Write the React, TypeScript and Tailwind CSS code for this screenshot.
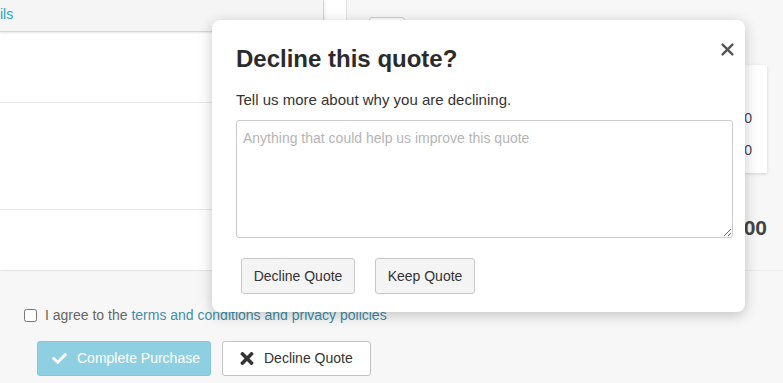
import React from "react";
import { FaCheck, FaTimes } from "react-icons/fa";

const font = "font-['Liberation_Sans',Arial,Helvetica,sans-serif]";

const DeclineModal = () => {
  return (
    <div className="absolute left-[212px] top-[20px] w-[533px] h-[292px] rounded-lg bg-white shadow-[0_3px_14px_rgba(0,0,0,0.22)] pl-6 pt-[24px]">
      {/* Close */}
      <button className="absolute right-[11px] top-[23px] w-[13px] h-[13px] text-[#555]">
        <svg viewBox="0 0 12 12" className="w-full h-full" fill="none" stroke="currentColor" strokeWidth="2.2" strokeLinecap="round">
          <path d="M1.5 1.5l9 9M10.5 1.5l-9 9" />
        </svg>
      </button>

      <h2 className="text-[24px] leading-[29px] font-bold text-[#2b2b2b]">
        Decline this quote?
      </h2>
      <p className="mt-[17px] text-[15px] leading-[20px] text-[#333]">
        Tell us more about why you are declining.
      </p>

      <textarea
        className="mt-[10px] block w-[497px] h-[118px] rounded-[3px] border border-[#ccc] px-[6px] py-[8px] text-[14px] leading-[18px] text-[#333] placeholder:text-[#b5b5b5] outline-none"
        placeholder="Anything that could help us improve this quote"
      />

      {/* Actions */}
      <div className="mt-5 ml-[5px] flex gap-5">
        <button className="w-[114px] h-[36px] rounded-[3px] border border-[#c8c8c8] bg-[#f4f4f4] text-[14px] text-[#333]">
          Decline Quote
        </button>
        <button className="w-[100px] h-[36px] rounded-[3px] border border-[#c8c8c8] bg-[#f4f4f4] text-[14px] text-[#333]">
          Keep Quote
        </button>
      </div>
    </div>
  );
};

const App = () => {
  return (
    <div className={`relative w-[783px] h-[383px] overflow-hidden bg-[#f7f7f7] ${font}`}>
      {/* Top area */}
      <div className="flex h-[270px] bg-white">
        {/* Left card */}
        <div className="w-[324px] flex flex-col border-r border-[#dcdcdc] shadow-[1px_0_3px_rgba(0,0,0,0.08)]">
          <div className="h-[32px] bg-[#f5f5f5] border-b border-[#d5d5d5] shadow-[0_1px_2px_rgba(0,0,0,0.1)] pt-[2px]">
            <span className="text-[14px] leading-[20px] text-[#2ba3c6]">ils</span>
          </div>
          <div className="h-[71px] border-b border-[#e6e6e6]" />
          <div className="h-[107px] border-b border-[#e6e6e6]" />
          <div className="flex-1" />
        </div>

        <div className="w-[22px]" />

        {/* Right column */}
        <div className="flex-1 bg-[#f7f7f7] border-l border-[#e2e2e2] pl-[22px] pt-[17px] flex flex-col">
          <div className="w-[36px] h-[30px] rounded-[3px] border border-[#ccc] bg-white" />
          <div className="mt-[18px] mr-4 h-[108px] bg-white shadow-[0_1px_3px_rgba(0,0,0,0.15)] pt-[37px] pr-[15px] text-right text-[14px] text-[#444]">
            <div className="leading-[32px]">$0.00</div>
            <div className="leading-[32px]">$0.00</div>
          </div>
          <div className="mt-[43px] mr-4 text-right text-[21px] leading-[24px] font-bold text-[#444]">
            $0.00
          </div>
        </div>
      </div>

      {/* Bottom area */}
      <div className="border-t border-[#ececec] px-6 pt-[35px]">
        <label className="flex items-center gap-2 text-[14px] leading-[18px] text-[#666]">
          <input type="checkbox" className="w-[13px] h-[13px] m-0" />
          <span>
            I agree to the{" "}
            <a className="text-[#3f8ea8]">terms and conditions and privacy policies</a>
          </span>
        </label>

        <div className="mt-[17px] ml-[13px] flex gap-[11px]">
          <button className="w-[174px] h-[35px] flex items-center gap-[10px] pl-[14px] rounded-[3px] border border-[#84c7db] bg-[#8ecfe2] text-[14px] text-white">
            <FaCheck className="w-[15px] h-[15px]" />
            Complete Purchase
          </button>
          <button className="w-[149px] h-[35px] flex items-center gap-[10px] pl-[17px] rounded-[3px] border border-[#c4c4c4] bg-white text-[14px] text-[#333]">
            <FaTimes className="w-[14px] h-[19px]" />
            Decline Quote
          </button>
        </div>
      </div>

      <DeclineModal />
    </div>
  );
};

export default App;
